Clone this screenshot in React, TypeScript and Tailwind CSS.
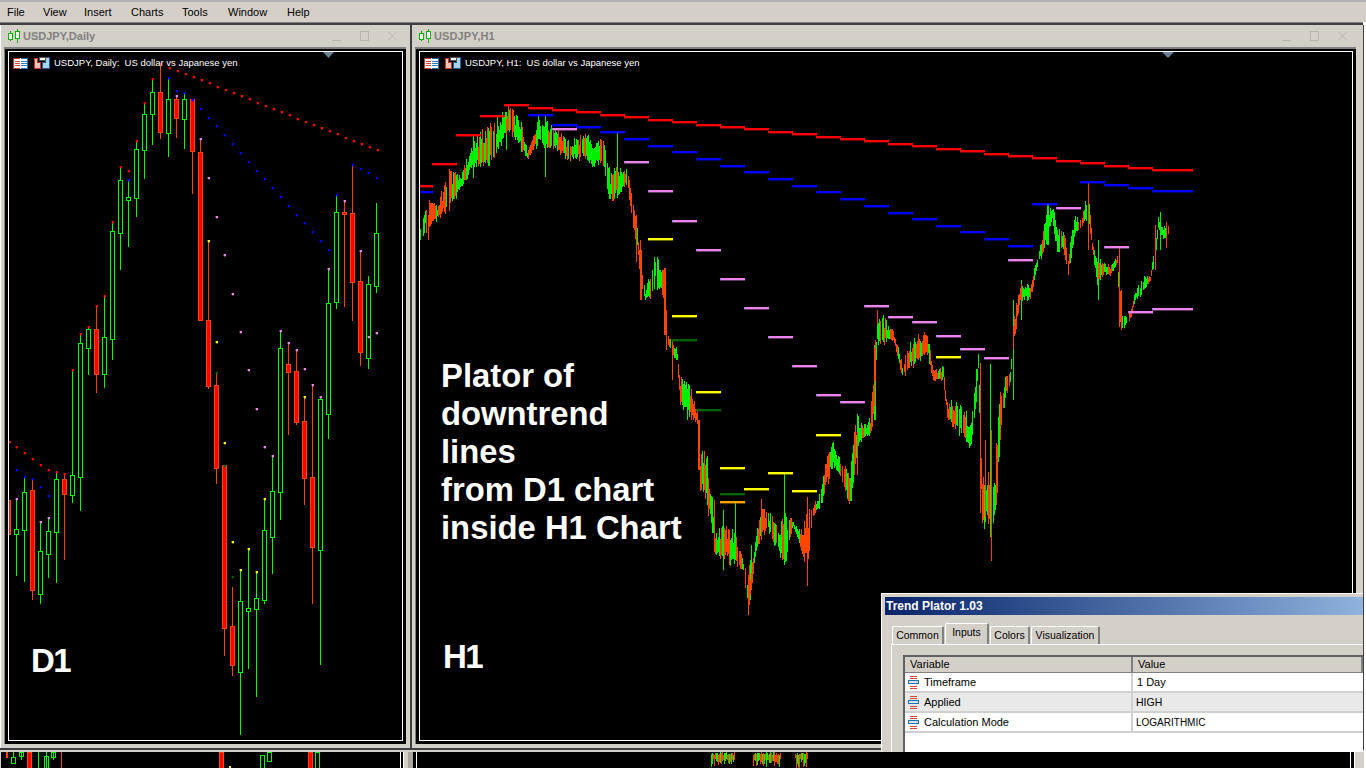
import React from 'react';

type C = [number, number, number, number, number, 0 | 1];
// x, wickTop, wickBot, bodyTop, bodyBot, 1=up(green) 0=down(red)
const D1: C[] = [
  [8,498,534,500,534,0],[16,498,576,529,534,1],[24,476,582,492,530,1],[32,478,600,490,590,0],[40,521,604,551,594,1],[48,517,578,531,554,1],
  [56,471,583,479,532,1],[64,473,560,479,494,0],[72,369,503,475,495,1],[80,333,511,343,477,1],[88,326,375,329,348,1],[96,305,393,329,374,0],
  [104,295,388,337,374,1],[112,221,360,231,339,1],[120,166,270,180,233,1],[128,179,247,197,200,1],[136,140,217,149,198,1],[144,102,179,114,150,1],
  [152,78,145,92,114,1],[160,63,139,92,132,0],[168,77,157,99,133,1],[176,95,138,99,118,0],[184,92,149,99,119,1],[192,99,194,99,151,0],
  [200,138,321,152,320,0],[208,240,389,320,386,0],[216,372,484,385,468,0],[224,465,656,465,628,0],[232,587,676,626,665,0],[240,569,735,601,672,1],
  [248,548,669,608,611,1],[256,571,697,598,609,1],[264,498,604,530,600,1],[272,455,574,491,537,1],[280,330,520,348,492,1],[288,342,435,364,372,0],
  [296,349,425,371,422,0],[304,396,505,421,478,0],[312,384,604,477,547,0],[320,396,665,399,550,1],[328,268,439,303,414,1],[336,194,309,212,302,1],
  [344,200,307,212,214,0],[352,164,321,213,282,0],[360,250,366,281,352,0],[368,276,369,284,358,1],[376,203,293,233,286,1],
];

const redDots: number[][] = [
  [9,441],[16,446],[24,452],[32,458],[40,464],[48,469],[56,471],[64,473],[72,369],[80,333],[88,326],[96,305],[104,295],[112,221],[120,166],[128,170],[136,140],[144,102],[152,78],[160,63],
  [169,67],[177,70],[185,73],[193,76],[201,79],[209,82],[217,86],[225,89],[233,92],[241,95],[249,98],[257,102],[265,105],[273,108],[281,111],[289,114],[297,118],[305,121],[313,124],[321,127],[329,130],[337,133],[345,137],[353,140],[361,143],[369,146],[377,149],
];
const blueDots: number[][] = [
  [16,469],[24,476],[32,478],[40,486],[48,495],[128,179],[168,77],[176,90],[184,92],[192,99],[200,108],[208,117],[216,125],[224,134],[232,143],[240,152],[248,161],[256,170],[264,178],[272,187],[280,196],[288,205],[296,214],[304,222],[312,231],[320,240],[328,249],[336,194],[352,164],[360,168],[368,172],[376,177],
];
const pinkDots: number[][] = [
  [16,498],[40,521],[48,517],[176,95],[200,138],[208,177],[216,216],[224,254],[232,293],[240,331],[248,369],[256,408],[264,446],[272,455],[280,330],[288,342],[296,349],[304,368],[312,384],[320,396],[328,268],[344,200],[360,250],[368,336],[376,332],
];
const yellowDots: number[][] = [
  [208,240],[216,341],[304,396],[224,442],[232,541],[240,569],[248,548],[256,571],[264,498],
];
const darkDots: number[][] = [[216,372],[224,465],[232,576]];

type Seg = [number, number, number?];
const redSeg: Seg[] = [[420,186,13],[432,164],[456,135],[480,116],[504,105],[528,108],[552,110],[576,112],[600,115],[624,117],[648,120],[672,122],[696,125],[720,127],[744,129],[768,132],[792,134],[816,137],[840,139],[864,141],[888,144],[912,146],[936,149],[960,151],[984,154],[1008,156],[1032,158],[1056,161],[1080,163],[1104,166],[1128,168],[1152,170,41]];
const blueSeg: Seg[] = [[420,192,13],[528,115],[552,125],[576,127],[600,132],[624,139],[648,146],[672,152],[696,159],[720,166],[744,172],[768,179],[792,186],[816,192],[840,199],[864,206],[888,213],[912,219],[936,226],[960,232],[984,239],[1008,246],[1032,204],[1080,182],[1104,185],[1128,188],[1152,191,41]];
const pinkSeg: Seg[] = [[552,129],[624,162],[648,191],[672,221],[696,250],[720,279],[744,308],[768,337],[792,366],[816,395],[840,402],[864,306],[888,317],[912,322],[936,336],[960,349],[984,358],[1008,260],[1056,208],[1104,247],[1128,312],[1152,309,41]];
const yellowSeg: Seg[] = [[648,239],[672,316],[696,392],[720,468],[744,489],[768,473],[792,491],[816,435],[936,357]];
const darkSeg: Seg[] = [[672,340],[696,410],[720,494]];
const orangeSeg: Seg[] = [[720,502]];

const K: number[][] = [
  [420,223,240],[425,194,234],[437,203,220],[445,178,215],[450,165,210],[460,175,190],[473,136,170],[493,120,165],[508,105,130],[520,115,150],[527,150,160],[538,115,145],[555,125,150],[567,140,160],[587,130,160],[593,140,170],[602,135,160],[610,170,205],[617,165,195],[627,165,185],[633,200,230],[637,220,250],[640,260,285],[645,290,300],[650,270,298],[655,240,290],[660,270,290],[663,270,300],[665,310,330],[668,335,345],[677,345,365],
  [680,375,410],[688,375,420],[697,410,425],[700,450,490],[707,450,510],[712,480,540],[715,530,555],[723,525,560],[735,525,570],[743,560,570],[748,580,614],[755,540,560],[760,505,540],[767,510,530],[780,520,560],[784,510,570],[793,520,525],[800,530,550],[807,505,570],[813,505,515],[820,490,510],[827,440,490],[833,440,465],[843,460,490],[850,460,510],[857,410,450],[863,425,440],[870,415,435],[874,345,420],[877,310,350],[883,315,345],[893,330,340],[902,360,380],[910,340,370],[927,325,355],[933,370,380],[943,365,380],[947,400,420],[957,400,435],[963,400,440],[970,425,450],[975,370,420],[978,350,370],[982,470,540],[987,465,520],[992,490,540],[995,450,530],[1000,390,440],[1005,370,400],[1010,370,385],[1013,320,350],
  [1020,280,300],[1030,285,300],[1037,255,270],[1047,205,240],[1052,205,220],[1057,220,255],[1062,225,250],[1068,250,275],[1075,215,235],[1082,215,225],[1088,185,220],[1092,240,250],[1097,255,285],[1103,260,275],[1110,265,275],[1117,255,265],[1120,290,330],[1123,315,330],[1130,310,320],[1135,290,300],[1143,275,295],[1150,275,280],[1155,240,260],[1158,215,230],[1163,225,240],[1168,225,235],
];

const greenSpikes = [[545,115,177],[617,133,198],[874,345,420],[875,345,420],[990,364,537],[784,473,565],[735,503,560],[723,510,570],[1098,240,300],[506,112,150],[473,136,178],[1013,300,400],[1160,212,250],[1047,205,245],[1048,205,245],[1021,280,320],[750,560,600],[751,545,590]];
const orangeSpikes = [[748,575,615],[749,565,605],[761,499,540],[991,430,561],[980,363,513],[985,440,517],[807,497,586],[857,432,475],[1088,183,250],[1119,247,327],[1155,225,270],[1166,222,248],[508,104,130],[428,215,240],[877,310,325],[699,420,470],[698,420,470],[664,268,335],[665,268,335],[666,310,350],[640,240,300],[641,250,300],[636,215,262],[672,340,380],[714,500,552],[1121,290,330]];

function rand(seed: number) {
  const s = Math.sin(seed * 127.1 + 11.7) * 43758.5453;
  return s - Math.floor(s);
}

function buildPrice() {
  let green = '';
  let orange = '';
  let j = 0;
  for (let x = 420; x <= 1168; x++) {
    while (j < K.length - 2 && K[j + 1][0] <= x) j++;
    const a = K[j];
    const b = K[j + 1];
    const t = (x - a[0]) / (b[0] - a[0]);
    const top = a[1] + (b[1] - a[1]) * t;
    const bot = a[2] + (b[2] - a[2]) * t;
    const h = bot - top;
    if (rand(x * 3.3) < 0.08) continue;
    const y1 = Math.round(top + rand(x * 0.7) * h * 0.45);
    const y2 = Math.round(bot - rand(x + 0.5) * h * 0.3 + 1);
    const seg = `M${x + 0.5} ${y1}V${Math.max(y2, y1 + 4)}`;
    const isGreen = rand(Math.floor(x / 2) * 1.7) < 0.52;
    if (isGreen) green += seg;
    else orange += seg;
  }
  for (const s of greenSpikes) green += `M${s[0] + 0.5} ${s[1]}V${s[2]}`;
  for (const s of orangeSpikes) orange += `M${s[0] + 0.5} ${s[1]}V${s[2]}`;
  return { green, orange };
}
const price = buildPrice();

const Dots = ({ pts, fill }: { pts: number[][]; fill: string }) => (
  <g fill={fill}>
    {pts.map((p, i) => (
      <g key={i}>
        <rect x={p[0]} y={p[1]} width={2} height={2} />
        <rect x={p[0] - 1} y={p[1]} width={1} height={2} opacity={0.35} />
        <rect x={p[0]} y={p[1] + 2} width={2} height={1} opacity={0.35} />
      </g>
    ))}
  </g>
);

const Segs = ({ segs, fill, edge }: { segs: Seg[]; fill: string; edge?: string }) => (
  <g>
    {segs.map((s, i) => (
      <g key={i}>
        <rect x={s[0]} y={s[1] - 1} width={s[2] ?? 25} height={2} fill={fill} />
        <rect x={s[0]} y={s[1] + 1} width={s[2] ?? 25} height={1} fill={fill} opacity={0.4} />
        {edge && <rect x={s[0]} y={s[1] - 1} width={1} height={2} fill={edge} />}
      </g>
    ))}
  </g>
);

const GridIcon = () => (
  <svg width="15" height="11" viewBox="0 0 15 11" className="block" shapeRendering="crispEdges">
    <rect x="0.5" y="0.5" width="14" height="10" fill="#fff" stroke="#c0392b" />
    <rect x="7" y="0" width="8" height="11" fill="#fff" />
    <path d="M7.5 .5H14.5V10.5H7.5" fill="none" stroke="#2a6fa8" />
    <path d="M2 3.500H7M2 5.500H7M2 7.500H7" stroke="#d9483b" />
    <path d="M8 3.500H14M8 5.500H14M8 7.500H14" stroke="#2a7fc0" />
  </svg>
);

const SaveIcon = () => (
  <svg width="16" height="12" viewBox="0 0 16 12" className="block" shapeRendering="crispEdges">
    <path d="M.5 1.500H3.500V5.500H6.500V11.500H.5Z" fill="#f4c4bc" stroke="#c0392b" />
    <path d="M8.500 5.500H11.500V.5H15.500V11.500H8.500Z" fill="#a8d4f0" stroke="#1f5f96" />
    <rect x="5" y="0.5" width="6" height="3" fill="#fff" stroke="#555" />
  </svg>
);

const CandleIcon = () => (
  <svg width="12" height="14" viewBox="0 0 12 14" className="block" shapeRendering="crispEdges">
    <path d="M2.500 2V12M9.500 0V14" stroke="#00b000" />
    <rect x="0.5" y="4.5" width="4" height="6" fill="#fff" stroke="#00b000" />
    <rect x="7.5" y="2.5" width="4" height="7" fill="#fff" stroke="#00b000" />
  </svg>
);

const WinButtons = () => (
  <div className="flex items-center gap-[19px] text-[#b9b6af]">
    <svg width="9" height="10" viewBox="0 0 9 10" className="block" shapeRendering="crispEdges">
      <path d="M0 9.500H9" stroke="currentColor" />
    </svg>
    <svg width="9" height="10" viewBox="0 0 9 10" className="block" shapeRendering="crispEdges">
      <rect x="0.5" y="0.5" width="8" height="9" fill="none" stroke="currentColor" />
    </svg>
    <svg width="9" height="10" viewBox="0 0 9 10" className="block">
      <path d="M0 .5L9 9.500M9 .5L0 9.500" stroke="currentColor" />
    </svg>
  </div>
);

const Legend = ({ text }: { text: string }) => (
  <div className="absolute left-[4px] top-[5px] flex items-center text-white text-[9.5px] leading-[12px] whitespace-pre" style={{ fontFamily: '"Liberation Sans", sans-serif' }}>
    <GridIcon />
    <span className="w-[6px]" />
    <SaveIcon />
    <span className="w-[4px]" />
    <span>{text}</span>
  </div>
);

const ParamIcon = () => (
  <svg width="11" height="13" viewBox="0 0 11 13" className="block" shapeRendering="crispEdges">
    <path d="M2 .5H9M2 2.500H9M2 10.500H9M2 12.500H9" stroke="#d04a3a" />
    <rect x="0.5" y="4.5" width="10" height="3" fill="#cfe4f5" stroke="#1f6fb0" />
  </svg>
);

const menu: [string, string][] = [
  ['File', 'w-[36px]'],
  ['View', 'w-[41px]'],
  ['Insert', 'w-[47px]'],
  ['Charts', 'w-[51px]'],
  ['Tools', 'w-[46px]'],
  ['Window', 'w-[59px]'],
  ['Help', 'w-[40px]'],
];

const rows = [
  ['Timeframe', '1 Day', 'bg-white', 'text-[11px] pl-[4px]'],
  ['Applied', 'HIGH', 'bg-[#e9e9e9]', 'text-[10.5px] pl-[3px]'],
  ['Calculation Mode', 'LOGARITHMIC', 'bg-white', 'text-[10px] pl-[3px]'],
];

const tabBase = 'flex items-center justify-center border-t border-l border-white border-r-2 border-r-[#808080] rounded-t-[2px]';

const StripLeft = () => (
  <svg width="399" height="16" viewBox="1 752 399 16" className="block" shapeRendering="crispEdges">
    <rect x="6" y="752" width="2" height="6" fill="#ff4500" />
    <rect x="11.5" y="757.5" width="4" height="6" fill="none" stroke="#00ff00" />
    <path d="M13.500 752V757M21.500 752V760M38.500 752V768M46.500 752V768M53.500 752V760" stroke="#00ff00" />
    <rect x="19.5" y="752" width="4" height="4" fill="none" stroke="#00ff00" />
    <rect x="27.5" y="752" width="4" height="16" fill="#ff0000" stroke="#ff4500" />
    <rect x="44.5" y="756" width="4" height="13" fill="none" stroke="#00ff00" />
    <rect x="51.5" y="752" width="4" height="5" fill="none" stroke="#00ff00" />
    <path d="M61.500 752V768" stroke="#ff4500" />
    <rect x="219.5" y="752" width="4" height="16" fill="#ff0000" stroke="#ff4500" />
    <rect x="229" y="766" width="2" height="2" fill="#ffff00" />
    <rect x="260.5" y="755.5" width="4" height="13" fill="none" stroke="#00ff00" />
    <rect x="267.5" y="752" width="4" height="9" fill="none" stroke="#00ff00" />
    <rect x="308.5" y="752" width="4" height="16" fill="#ff0000" stroke="#ff4500" />
    <rect x="315.5" y="752" width="4" height="16" fill="none" stroke="#00ff00" />
  </svg>
);

const stripBars = (() => {
  let g = '';
  let o = '';
  [[711, 735], [753, 781], [795, 808]].forEach(([a, b]) => {
    for (let x = a; x < b; x++) {
      const y1 = 752 + Math.round(rand(x) * 3);
      const y2 = 768 - Math.round(rand(x + 0.3) * 10);
      if (rand(x * 5.1) < 0.55) g += `M${x + 0.5} ${y1}V${y2}`;
      else o += `M${x + 0.5} ${y1}V${y2}`;
    }
  });
  return { g, o };
})();

export default function App() {
  return (
    <div className="relative w-[1366px] h-[768px] overflow-hidden bg-white flex flex-col" style={{ fontFamily: '"Liberation Sans", Arial, sans-serif' }}>
      <div className="h-[2px] bg-[#b2b2b2]" />
      <div className="h-[20px] bg-[#d4d0c8] flex items-center pl-[7px] text-[11px] text-black">
        {menu.map(([m, w]) => (
          <span key={m} className={w}>{m}</span>
        ))}
      </div>
      <div className="h-[3px] bg-[#404040] mr-[3px] border-t border-[#808080]" />

      <div className="flex flex-col w-[1364px] flex-1 bg-[#404040]">
        <div className="flex h-[723px] gap-[2px]">
          {/* Daily window */}
          <div className="w-[410px] bg-[#d4d0c8] flex flex-col border-l border-white pb-[4px] pl-[3px] pr-[4px]">
            <div className="h-[22px] flex items-center justify-between pr-[9px] pl-[4px]">
              <div className="flex items-center gap-[3px]">
                <CandleIcon />
                <span className="text-[11px] font-bold text-[#808080]">USDJPY,Daily</span>
              </div>
              <WinButtons />
            </div>
            <div className="flex-1 border-l border-t-2 border-[#808080] bg-black pl-[3px] pr-[3px] pt-[2px] pb-[3px] flex">
              <div className="relative flex-1 border border-white">
                <svg width="393" height="688" viewBox="9 52 393 688" className="block">
                  <path d="M323 52H334L328.500 58Z" fill="#6c7f90" />
                  <g shapeRendering="crispEdges">
                    {D1.map((c, i) => {
                      const col = c[5] ? '#00ff00' : '#ff4500';
                      return (
                        <g key={i}>
                          <path d={`M${c[0] + 0.5} ${c[1]}V${c[2]}`} stroke={col} />
                          <rect x={c[0] - 1.5} y={c[3] + 0.5} width={4} height={c[4] - c[3]} fill={c[5] ? '#000' : '#ff0000'} stroke={col} />
                        </g>
                      );
                    })}
                    <Dots pts={redDots} fill="#ff0000" />
                    <Dots pts={blueDots} fill="#0000ff" />
                    <Dots pts={pinkDots} fill="#ee82ee" />
                    <Dots pts={yellowDots} fill="#ffff00" />
                    <Dots pts={darkDots} fill="#006400" />
                  </g>
                </svg>
                <Legend text="USDJPY, Daily:  US dollar vs Japanese yen" />
                <div className="absolute left-[22px] top-[590px] text-white font-bold text-[33px] leading-[38px] tracking-[-1.5px]">D1</div>
              </div>
            </div>
          </div>

          {/* H1 window */}
          <div className="w-[951px] bg-[#d4d0c8] flex flex-col pb-[4px] pl-[3px] pr-[7px]">
            <div className="h-[22px] flex items-center justify-between pr-[9px] pl-[4px]">
              <div className="flex items-center gap-[3px]">
                <CandleIcon />
                <span className="text-[11px] font-bold text-[#808080] tracking-[0.1px]">USDJPY,H1</span>
              </div>
              <WinButtons />
            </div>
            <div className="flex-1 border-l border-t-2 border-[#808080] bg-black pl-[3px] pr-[3px] pt-[2px] pb-[3px] flex">
              <div className="relative flex-1 border border-white">
                <svg width="932" height="688" viewBox="420 52 932 688" className="block">
                  <path d="M1162 52H1174L1168 58Z" fill="#6c7f90" />
                  <g shapeRendering="crispEdges">
                    <path d={price.green} stroke="#00f000" fill="none" />
                    <path d={price.orange} stroke="#ff4500" fill="none" />
                    <Segs segs={redSeg} fill="#ff0000" />
                    <Segs segs={blueSeg} fill="#0000ff" />
                    <Segs segs={pinkSeg} fill="#ee82ee" edge="#8f86ff" />
                    <Segs segs={yellowSeg} fill="#ffff00" />
                    <Segs segs={darkSeg} fill="#006400" />
                    <Segs segs={orangeSeg} fill="#ffa500" />
                  </g>
                </svg>
                <Legend text="USDJPY, H1:  US dollar vs Japanese yen" />
                <div className="absolute left-[21px] top-[305px] text-white font-bold text-[32.8px] leading-[38px]">
                  <div>Plator of</div>
                  <div>downtrend</div>
                  <div>lines</div>
                  <div>from D1 chart</div>
                  <div>inside H1 Chart</div>
                </div>
                <div className="absolute left-[23px] top-[586px] text-white font-bold text-[33px] leading-[38px] tracking-[-1.5px]">H1</div>
              </div>
            </div>
          </div>
        </div>

        <div className="h-[2px] bg-[#404040]" />
        <div className="h-[2px] bg-[#d4d0c8]" />

        {/* partially visible charts below */}
        <div className="h-[16px] flex">
          <div className="w-[1px] bg-[#d4d0c8]" />
          <div className="w-[399px] bg-black overflow-hidden">
            <StripLeft />
          </div>
          <div className="w-[1px] bg-white" />
          <div className="w-[2px] bg-black" />
          <div className="w-[5px] bg-[#d4d0c8] border-l border-white" />
          <div className="w-[5px] bg-[#a8a8a0]" />
          <div className="w-[3px] bg-black" />
          <div className="flex-1 bg-black border-l border-white">
            <svg width="933" height="16" viewBox="417 752 933 16" className="block" shapeRendering="crispEdges">
              <path d={stripBars.g} stroke="#00f000" />
              <path d={stripBars.o} stroke="#ff4500" />
            </svg>
          </div>
          <div className="w-[1px] bg-white" />
          <div className="w-[3px] bg-black" />
          <div className="w-[10px] bg-[#d4d0c8] border-l border-white" />
        </div>
      </div>

      {/* Properties dialog */}
      <div className="absolute left-[881px] top-[593px] w-[482px] h-[159px] bg-[#d4d0c8] border-t border-l border-white pt-[3px] pl-[3px] flex flex-col text-black">
        <div className="h-[18px] shrink-0 bg-gradient-to-r from-[#0a246a] to-[#90b2dd] flex items-center pl-[1px]">
          <span className="text-white font-bold text-[12px]">Trend Plator 1.03</span>
        </div>
        <div className="h-[21px] shrink-0 mt-[8px] pl-[7px] flex items-end text-[10.5px] gap-[1px]">
          <div className={`${tabBase} w-[52px] h-[18px]`}>Common</div>
          <div className={`${tabBase} w-[44px] h-[21px] bg-[#d4d0c8] pb-[3px]`}>Inputs</div>
          <div className={`${tabBase} w-[40px] h-[18px]`}>Colors</div>
          <div className={`${tabBase} w-[69px] h-[18px]`}>Visualization</div>
        </div>
        <div className="flex-1 ml-[6px] border-t border-l border-white pl-[11px] pt-[10px] flex flex-col min-h-0">
          <div className="flex-1 bg-white border-t-2 border-l-2 border-[#606060] flex flex-col text-[11px]">
            <div className="h-[16px] shrink-0 bg-[#d4d0c8] flex border-b border-[#808080] leading-[15px]">
              <div className="w-[228px] pl-[5px] border-r-2 border-[#808080]">Variable</div>
              <div className="flex-1 pl-[5px] border-r-2 border-[#808080]">Value</div>
            </div>
            {rows.map((r) => (
              <div key={r[0]} className={`h-[20px] shrink-0 flex items-center border-b-2 border-[#d0d0d0] ${r[2]}`}>
                <div className="w-[228px] h-full flex items-center gap-[5px] pl-[3px] pt-[1px] border-r-2 border-[#d0d0d0]">
                  <ParamIcon />
                  <span>{r[0]}</span>
                </div>
                <div className={`${r[3]} pt-[1px]`}>{r[1]}</div>
              </div>
            ))}
          </div>
        </div>
      </div>
    </div>
  );
}
